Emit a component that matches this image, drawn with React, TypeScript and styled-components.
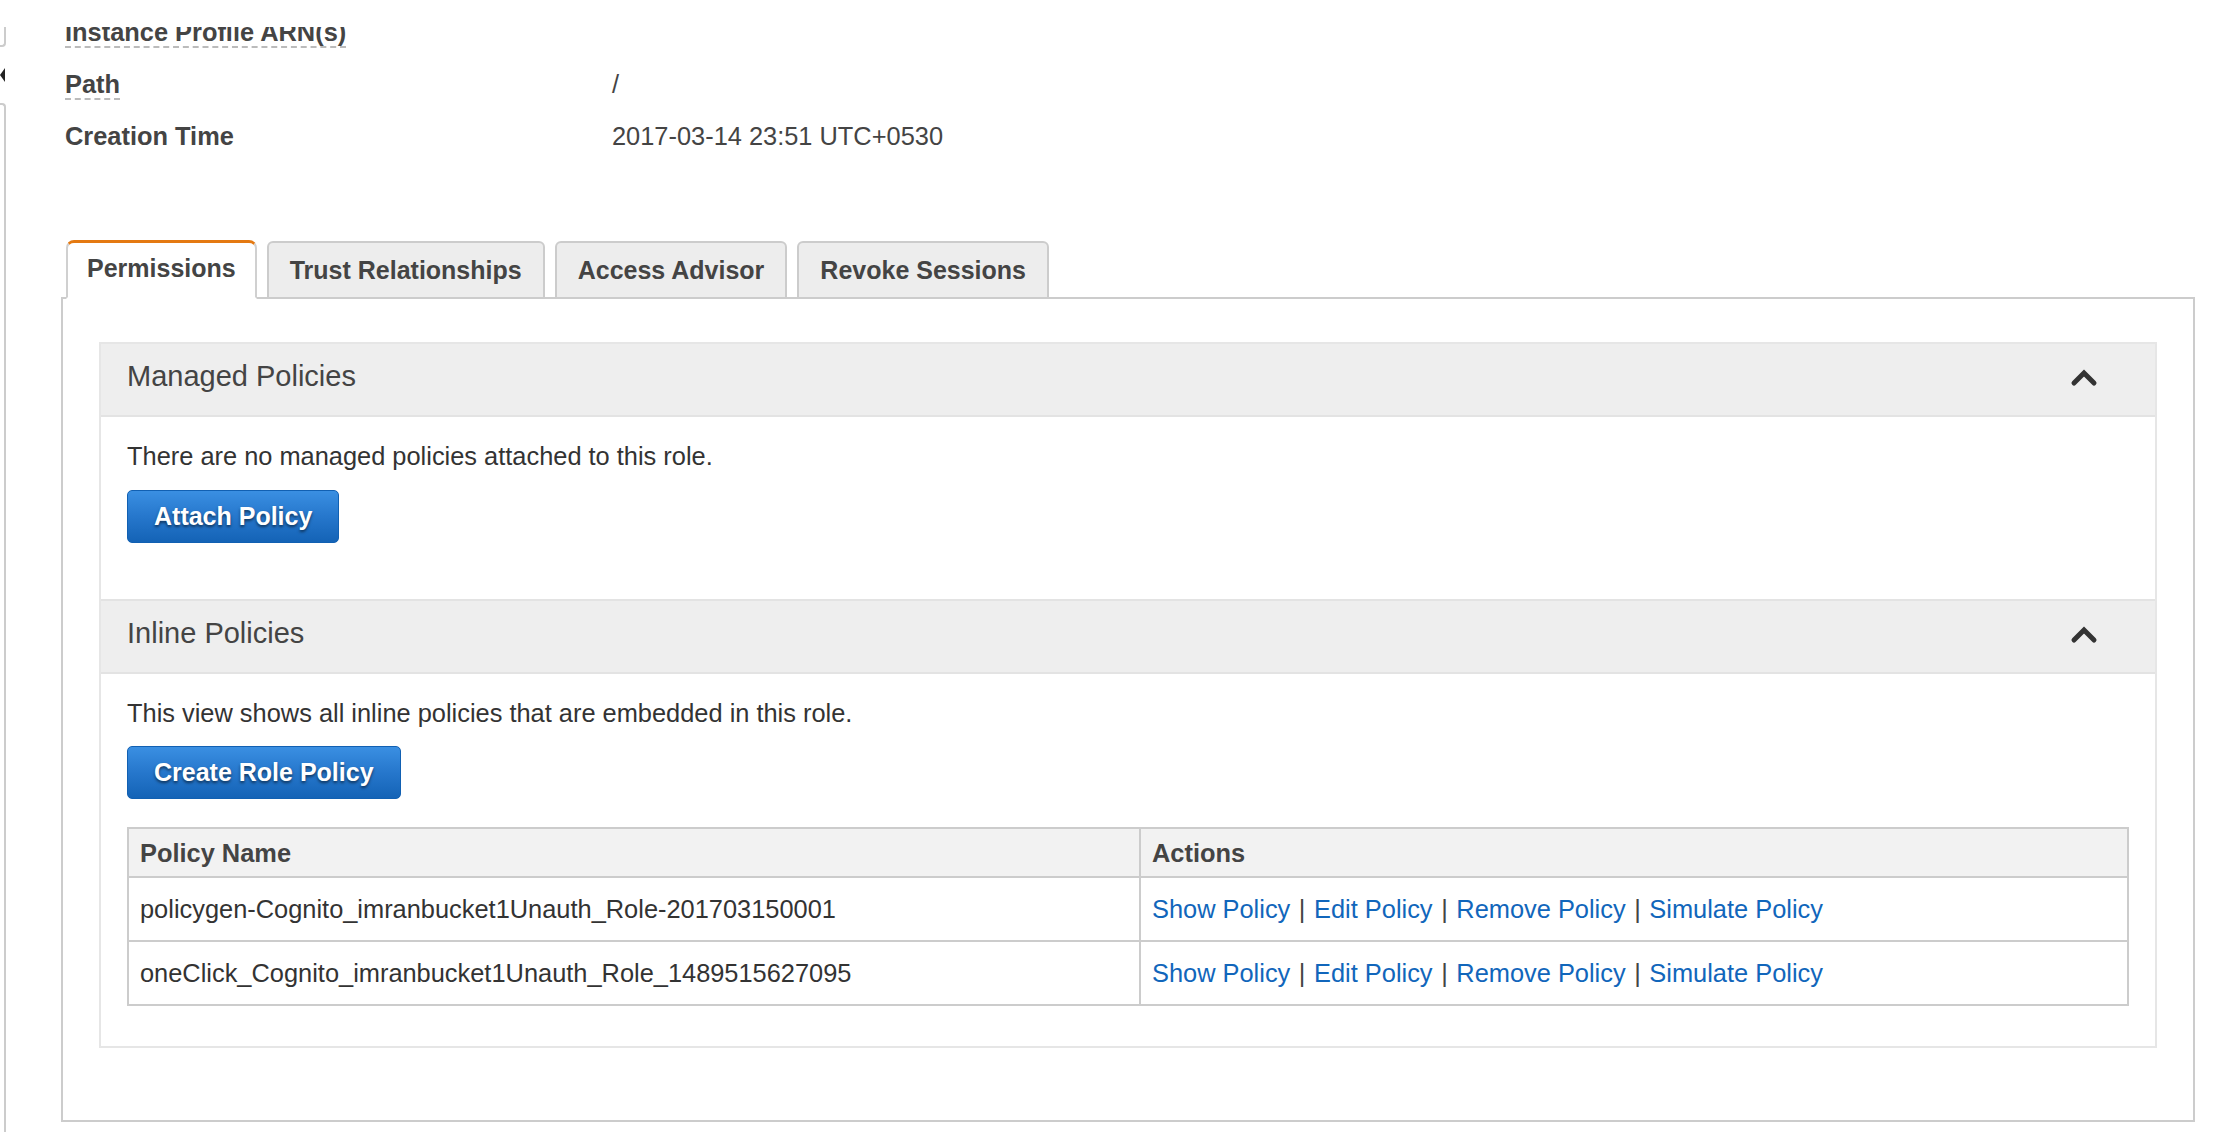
import React from "react";
import styled, { createGlobalStyle } from "styled-components";

const GlobalStyle = createGlobalStyle`
    html, body {
        margin: 0;
        padding: 0;
        background: #fff;
    }
    body {
        font-family: "Liberation Sans", Arial, Helvetica, sans-serif;
        color: #444;
    }
`;

const Page = styled.div`
    padding-top: 27px;
    background: #fff;
`;

const Frame = styled.div`
    display: flex;
    height: 1105px;
    overflow: hidden;
`;

const SideStrip = styled.div`
    width: 6px;
    display: flex;
    flex-direction: column;
    flex-shrink: 0;
`;

const StripTop = styled.div`
    height: 18px;
    border-right: 2px solid #ccc;
    border-bottom: 2px solid #ccc;
    border-bottom-right-radius: 4px;
`;

const StripHandle = styled.div`
    height: 56px;
    display: flex;
    align-items: center;
`;

const Arrow = styled.span`
    width: 0;
    height: 0;
    border-top: 7px solid transparent;
    border-bottom: 7px solid transparent;
    border-right: 5px solid #222;
`;

const StripBottom = styled.div`
    flex: 1;
    border-right: 2px solid #ccc;
    border-top: 2px solid #ccc;
    border-top-right-radius: 4px;
`;

const Main = styled.div`
    flex: 1;
    padding: 0 21px 0 55px;
`;

const Details = styled.div`
    margin-top: -21px;
    padding-left: 4px;
`;

const DetailRow = styled.div`
    display: flex;
    height: 52px;
    line-height: 52px;
    font-size: 25.4px;
`;

const Label = styled.div`
    width: 547px;
    font-weight: bold;
    color: #444;
`;

const Hint = styled.span`
    border-bottom: 2px dashed #bbb;
`;

const Value = styled.div`
    color: #444;
`;

const TabRow = styled.div`
    display: flex;
    align-items: flex-end;
    gap: 10px;
    margin-top: 78px;
    margin-bottom: -2px;
    padding-left: 5px;
    position: relative;
    z-index: 1;
`;

const Tab = styled.div<{ active?: boolean }>`
    font-size: 25px;
    line-height: 30px;
    font-weight: bold;
    color: #444;
    border: 2px solid ${p => (p.active ? "#d0d0d0" : "#ccc")};
    border-top: ${p => (p.active ? "3px solid #e47911" : "2px solid #ccc")};
    border-bottom: 2px solid ${p => (p.active ? "#fff" : "#ccc")};
    border-radius: ${p => (p.active ? "8px 8px 0 0" : "6px 6px 0 0")};
    background: ${p => (p.active ? "#fff" : "#ededed")};
    padding: ${p => (p.active ? "10px 19px 14px" : "12px 21px 12px")};
`;

const TabBody = styled.div`
    border: 2px solid #ccc;
    padding: 43px 36px 72px;
`;

const Panel = styled.div`
    border: 2px solid #e6e6e6;
`;

const SectionHeader = styled.div`
    display: flex;
    align-items: center;
    justify-content: space-between;
    box-sizing: border-box;
    height: 73px;
    padding: 0 57px 6px 26px;
    background: #eee;
    border-bottom: 2px solid #e3e3e3;
    font-size: 29px;
    color: #444;

    svg {
        margin-top: 2px;
    }
`;

const SectionBody = styled.div<{ bottom: number }>`
    padding: 24px 26px ${p => p.bottom}px;
    font-size: 25.4px;
    line-height: 30px;
    color: #333;

    & + ${SectionHeader} {
        border-top: 2px solid #e3e3e3;
        height: 75px;
    }
`;

const PrimaryButton = styled.button<{ gap?: number }>`
    display: block;
    margin-top: ${p => p.gap ?? 19}px;
    height: 53px;
    padding: 0 26px;
    font-family: "Liberation Sans", Arial, Helvetica, sans-serif;
    font-size: 25px;
    font-weight: bold;
    color: #fff;
    text-shadow: 0 2px 3px rgba(0, 0, 0, 0.55);
    background: linear-gradient(to bottom, #3a8fe2 0%, #2677cc 50%, #1463b6 100%);
    border: 1px solid #1160b2;
    border-radius: 5px;
    cursor: pointer;
`;

const PolicyTable = styled.table`
    width: 100%;
    margin-top: 28px;
    border-collapse: collapse;
    font-size: 25.4px;

    th, td {
        border: 2px solid #ccc;
        text-align: left;
        padding: 0 11px;
    }

    th {
        height: 47px;
        background: #f2f2f2;
        font-weight: bold;
        color: #444;
    }

    td {
        height: 62px;
        color: #333;
    }
`;

const NameCell = styled.td`
    width: 988px;
`;

const ActionLink = styled.a`
    color: #1166bb;
    text-decoration: none;
    cursor: pointer;
`;

const Sep = styled.span`
    color: #444;
    margin: 0 1.5px;
`;

const Chevron = () => (
    <svg width="28" height="20" viewBox="0 0 28 20">
        <polyline
            points="4,15 14,5 24,15"
            fill="none"
            stroke="#333"
            strokeWidth="5"
            strokeLinecap="round"
        />
    </svg>
);

const policies = [
    "policygen-Cognito_imranbucket1Unauth_Role-201703150001",
    "oneClick_Cognito_imranbucket1Unauth_Role_1489515627095",
];

const actions = ["Show Policy", "Edit Policy", "Remove Policy", "Simulate Policy"];

const tabs = ["Permissions", "Trust Relationships", "Access Advisor", "Revoke Sessions"];

export default function App() {
    return (
        <Page>
            <GlobalStyle />
            <Frame>
                <SideStrip>
                    <StripTop />
                    <StripHandle>
                        <Arrow />
                    </StripHandle>
                    <StripBottom />
                </SideStrip>
                <Main>
                    <Details>
                        <DetailRow>
                            <Label><Hint>Instance Profile ARN(s)</Hint></Label>
                            <Value></Value>
                        </DetailRow>
                        <DetailRow>
                            <Label><Hint>Path</Hint></Label>
                            <Value>/</Value>
                        </DetailRow>
                        <DetailRow>
                            <Label>Creation Time</Label>
                            <Value>2017-03-14 23:51 UTC+0530</Value>
                        </DetailRow>
                    </Details>

                    <TabRow>
                        {tabs.map((t, i) => (
                            <Tab key={t} active={i === 0}>{t}</Tab>
                        ))}
                    </TabRow>

                    <TabBody>
                        <Panel>
                            <SectionHeader>
                                <span>Managed Policies</span>
                                <Chevron />
                            </SectionHeader>
                            <SectionBody bottom={56}>
                                There are no managed policies attached to this role.
                                <PrimaryButton>Attach Policy</PrimaryButton>
                            </SectionBody>
                            <SectionHeader>
                                <span>Inline Policies</span>
                                <Chevron />
                            </SectionHeader>
                            <SectionBody bottom={40}>
                                This view shows all inline policies that are embedded in this role.
                                <PrimaryButton gap={18}>Create Role Policy</PrimaryButton>
                                <PolicyTable>
                                    <thead>
                                        <tr>
                                            <th>Policy Name</th>
                                            <th>Actions</th>
                                        </tr>
                                    </thead>
                                    <tbody>
                                        {policies.map(name => (
                                            <tr key={name}>
                                                <NameCell>{name}</NameCell>
                                                <td>
                                                    {actions.map((a, i) => (
                                                        <React.Fragment key={a}>
                                                            {i > 0 && <Sep> | </Sep>}
                                                            <ActionLink>{a}</ActionLink>
                                                        </React.Fragment>
                                                    ))}
                                                </td>
                                            </tr>
                                        ))}
                                    </tbody>
                                </PolicyTable>
                            </SectionBody>
                        </Panel>
                    </TabBody>
                </Main>
            </Frame>
        </Page>
    );
}
